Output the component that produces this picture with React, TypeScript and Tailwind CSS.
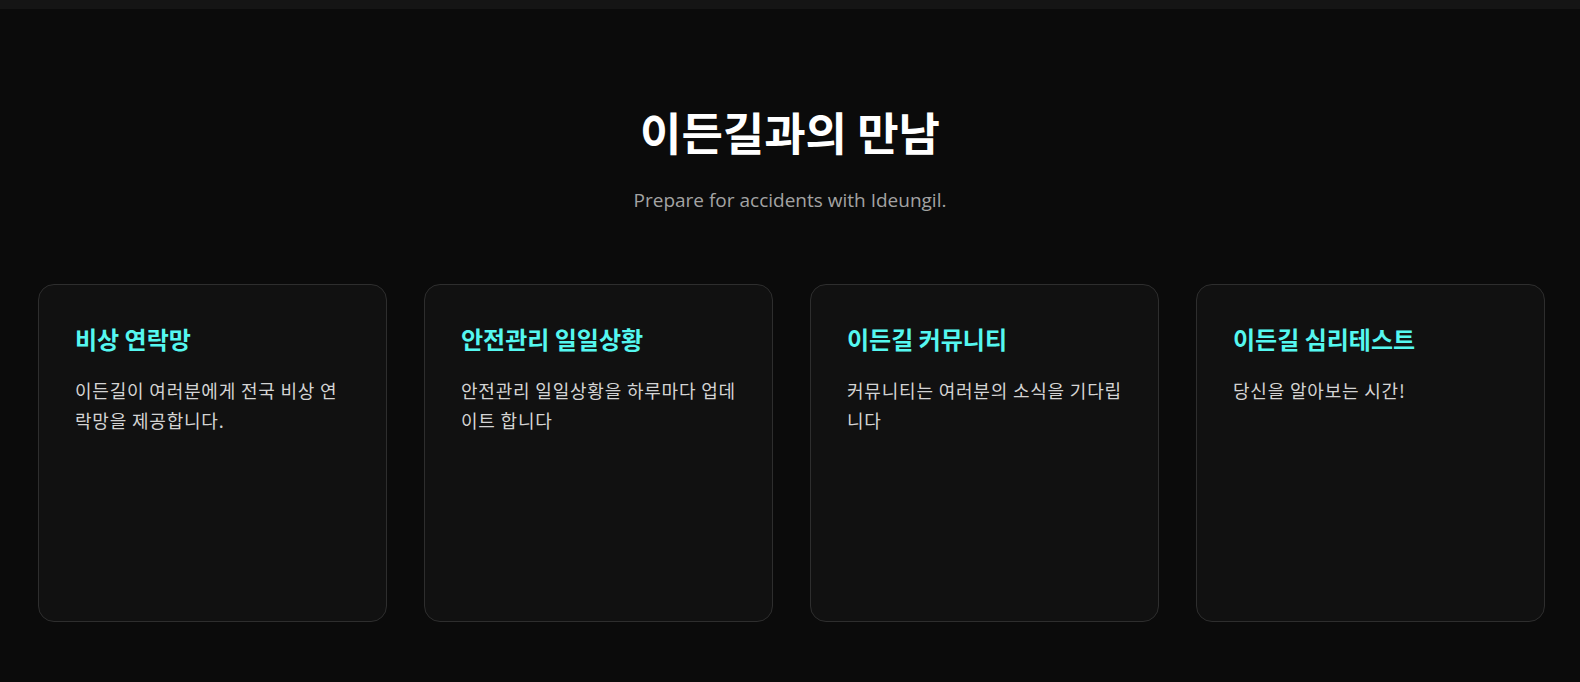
import React from "react";

const cards = [
  { title: "비상 연락망", body: "이든길이 여러분에게 전국 비상 연락망을 제공합니다." },
  { title: "안전관리 일일상황", body: "안전관리 일일상황을 하루마다 업데이트 합니다" },
  { title: "이든길 커뮤니티", body: "커뮤니티는 여러분의 소식을 기다립니다" },
  { title: "이든길 심리테스트", body: "당신을 알아보는 시간!" },
];

export default function App() {
  return (
    <div className="w-[1580px] h-[682px] bg-[#0b0b0b] overflow-hidden flex flex-col">
      <div className="h-[9px] bg-[#151515] shrink-0" />
      <div className="flex flex-col items-center pt-[93px]">
        <h1
          className="text-[45px] font-bold text-white leading-[60px]"
          style={{ fontFamily: '"Noto Sans CJK KR", sans-serif' }}
        >
          이든길과의 만남
        </h1>
        <p
          className="mt-[26px] text-[19px] text-[#a3a3a3] leading-[24px]"
          style={{ fontFamily: '"Open Sans", sans-serif' }}
        >
          Prepare for accidents with Ideungil.
        </p>
      </div>
      <div className="grid grid-cols-4 gap-[37px] pl-[38px] pr-[35px] mt-[72px]">
        {cards.map((c) => (
          <div
            key={c.title}
            className="h-[338px] rounded-[16px] border border-[#2e2e2e] bg-[#111111] px-[36px] pt-[37px]"
          >
            <h2
              className="text-[24px] font-bold text-[#55f7f0] leading-[33px]"
              style={{ fontFamily: '"Noto Sans CJK KR", sans-serif' }}
            >
              {c.title}
            </h2>
            <p
              className="mt-[20px] text-[18px] tracking-[0.8px] text-[#d4d4d4] leading-[30px]"
              style={{ fontFamily: '"Noto Sans CJK KR", sans-serif' }}
            >
              {c.body}
            </p>
          </div>
        ))}
      </div>
    </div>
  );
}
